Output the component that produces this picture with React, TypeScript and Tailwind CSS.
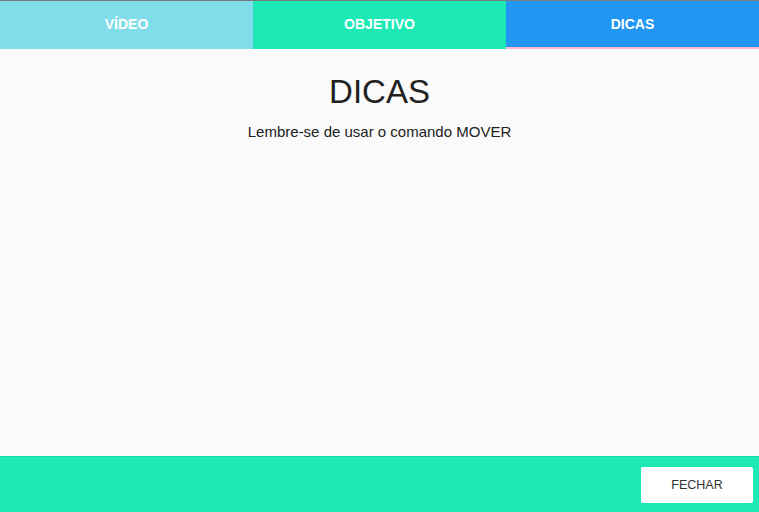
export default function App() {
  const tabs = [
    { label: "VÍDEO", bg: "bg-[#80deea]", active: false },
    { label: "OBJETIVO", bg: "bg-[#1de9b6]", active: false },
    { label: "DICAS", bg: "bg-[#2196f3]", active: true },
  ];

  return (
    <div className="h-[512px] w-full flex flex-col bg-[#fafafa] font-['Liberation_Sans',Arial,sans-serif] overflow-hidden">
      <div className="h-px bg-[#7a7a7a]" />

      {/* Tabs */}
      <div className="flex h-[48px]">
        {tabs.map((t) => (
          <div key={t.label} className={`flex-1 flex flex-col ${t.bg}`}>
            <div className="flex-1 flex items-center justify-center text-white text-[14px] font-bold">
              {t.label}
            </div>
            <div className={`h-[2px] ${t.active ? "bg-[#ffb8c4]" : ""}`} />
          </div>
        ))}
      </div>

      {/* Content */}
      <div className="flex-1 flex flex-col items-center text-[#212121]">
        <h1 className="mt-[23px] text-[33px] leading-[40px]">DICAS</h1>
        <p className="mt-[10px] text-[15px] leading-[20px]">Lembre-se de usar o comando MOVER</p>
      </div>

      {/* Footer */}
      <div className="h-[56px] bg-[#1de9b6] border-t border-[#1ad6a7] flex items-start justify-end pt-[10px] pr-[6px]">
        <button className="w-[112px] h-[36px] bg-white rounded-[2px] text-[12.5px] text-[#333]">
          FECHAR
        </button>
      </div>
    </div>
  );
}
